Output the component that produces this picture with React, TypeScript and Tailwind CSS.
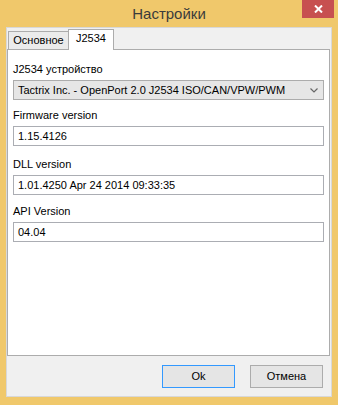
import React from 'react';

const font = { fontFamily: '"Liberation Sans", Arial, sans-serif' };

const Field: React.FC<{ label: string; value: string; className?: string }> = ({ label, value, className }) => (
  <div className={`flex flex-col ${className ?? ''}`}>
    <div className="h-[17px] leading-[17px] text-[11px] text-black">{label}</div>
    <div className="mt-[2px] h-[20px] border border-[#ABADB3] bg-white pl-[4px] text-[11px] leading-[18px] text-black">
      {value}
    </div>
  </div>
);

export default function App() {
  return (
    <div className="w-[338px] h-[405px] bg-[#F0C86B] flex flex-col" style={font}>
      {/* Title bar */}
      <div className="relative h-[27px] shrink-0 flex items-center justify-center">
        <span className="text-[15px] text-[#3b3b3b] pt-[1px]">Настройки</span>
        <div className="absolute right-[4px] top-0 w-[32px] h-[18px] bg-[#C75050] flex items-center justify-center">
          <svg width="9" height="8" viewBox="0 0 9 8">
            <path d="M1 0.5 L8 7.5 M8 0.5 L1 7.5" stroke="white" strokeWidth="2" />
          </svg>
        </div>
      </div>

      {/* Client */}
      <div className="ml-[6px] mr-[6px] mb-[8px] flex-1 bg-[#F0F0F0] border border-[#D8D8D8] flex flex-col">
        {/* Tabs */}
        <div className="h-[21px] flex items-end pl-[1px] shrink-0">
          <div className="h-[18px] w-[61px] border border-[#ACACAC] border-b-0 bg-[#EBEBEB] text-[11px] leading-[17px] text-center text-black">
            Основное
          </div>
          <div className="relative h-[21px] w-[46px] border border-[#ACACAC] border-b-0 bg-white text-[11px] leading-[17px] text-center text-black -ml-[1px] z-10 translate-y-[1px]">
            J2534
          </div>
        </div>
        <div className="h-[307px] mr-[1px] border border-[#ACACAC] bg-white px-[5px] pt-[11px] flex flex-col">
          <div className="flex flex-col">
            <div className="h-[17px] leading-[17px] text-[11px] text-black">J2534 устройство</div>
            <div className="mt-[2px] h-[20px] border border-[#ACACAC] bg-[#E6E6E6] pl-[4px] pr-[5px] flex items-center justify-between text-[11px] text-black">
              <span>Tactrix Inc. - OpenPort 2.0 J2534 ISO/CAN/VPW/PWM</span>
              <svg width="8" height="5" viewBox="0 0 8 5">
                <path d="M0.5 0.5 L4 4 L7.5 0.5" stroke="#666" strokeWidth="1.2" fill="none" />
              </svg>
            </div>
          </div>
          <Field label="Firmware version" value="1.15.4126" className="mt-[7px]" />
          <Field label="DLL version" value="1.01.4250 Apr 24 2014 09:33:35" className="mt-[10px]" />
          <Field label="API Version" value="04.04" className="mt-[8px]" />
        </div>

        {/* Buttons */}
        <div className="flex-1 flex items-center justify-end gap-[15px] pr-[8px] pt-[1px]">
          <div className="w-[73px] h-[23px] border border-[#3399FF] bg-[#E5E5E5] text-[11px] leading-[21px] text-center text-black">
            Ok
          </div>
          <div className="w-[73px] h-[23px] border border-[#ACACAC] bg-[#E5E5E5] text-[11px] leading-[21px] text-center text-black">
            Отмена
          </div>
        </div>
      </div>
    </div>
  );
}
